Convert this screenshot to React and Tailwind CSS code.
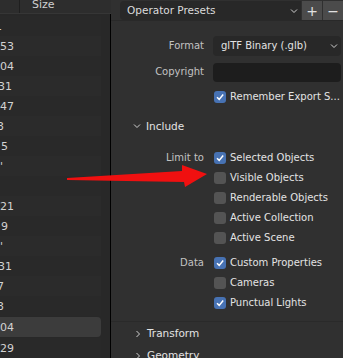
import React from "react";

const leftRows = [
  { t: "1", ml: "-ml-[5px]" },
  { t: "53", ml: "ml-0" },
  { t: "04", ml: "ml-0" },
  { t: "31", ml: "-ml-[2px]" },
  { t: "47", ml: "ml-0" },
  { t: "3", ml: "-ml-[3px]" },
  { t: "5", ml: "ml-[1px]" },
  { t: "'", ml: "ml-0" },
  { t: "", ml: "ml-0" },
  { t: "21", ml: "ml-0" },
  { t: "9", ml: "ml-[1px]" },
  { t: "'", ml: "ml-0" },
  { t: "31", ml: "-ml-[2px]" },
  { t: "7", ml: "-ml-[3px]" },
  { t: "3", ml: "-ml-[3px]" },
  { t: "04", ml: "ml-0", active: true },
  { t: "29", ml: "ml-0" },
];

const Check = ({ on }) => (
  <div
    className={`w-[12px] h-[12px] rounded-[3px] flex items-center justify-center ${
      on ? "bg-[#4772b3]" : "bg-[#545454]"
    }`}
  >
    {on && (
      <svg width="10" height="10" viewBox="0 0 10 10">
        <path d="M2 5.2 L4.2 7.4 L8.2 2.6" fill="none" stroke="#fff" strokeWidth="1.5" />
      </svg>
    )}
  </div>
);

const Row = ({ label, children, className = "" }) => (
  <div className={`flex items-center h-[20px] ${className}`}>
    <div className="w-[93px] shrink-0 text-right text-[#c2c2c2]">{label}</div>
    <div className="ml-[9px] flex-1 flex items-center min-w-0">{children}</div>
  </div>
);

const CheckRow = ({ label, text, on }) => (
  <Row label={label}>
    <div className="ml-[1px] flex items-center gap-[4px]">
      <Check on={on} />
      <span className="text-[#e3e3e3] whitespace-nowrap">{text}</span>
    </div>
  </Row>
);

const Chevron = ({ down }) => (
  <svg width="8" height="8" viewBox="0 0 8 8">
    {down ? (
      <path d="M1 2.5 L4 5.5 L7 2.5" fill="none" stroke="#cfcfcf" strokeWidth="1" />
    ) : (
      <path d="M2.5 1 L5.5 4 L2.5 7" fill="none" stroke="#cfcfcf" strokeWidth="1" />
    )}
  </svg>
);

export default function App() {
  return (
    <div
      className="relative w-[343px] h-[358px] overflow-hidden flex text-[10px] leading-none"
      style={{ fontFamily: '"DejaVu Sans", "Liberation Sans", sans-serif' }}
    >
      {/* file list */}
      <div className="w-[111px] shrink-0 flex flex-col bg-[#282828]">
        <div className="h-[15px] flex bg-[#2d2d2d] border-b border-[#363636]">
          <div className="w-[20px] border-r border-[#1f1f1f]" />
          <div className="pl-[12px] text-[#d0d0d0] text-[11px] -mt-[1px]">Size</div>
        </div>
        <div className="flex-1 flex border-r border-black">
          <div className="w-[101px] pt-[2px] flex flex-col">
            {leftRows.map((r, i) => (
              <div
                key={i}
                className={`h-[20px] flex items-center overflow-hidden ${
                  r.active
                    ? "bg-[#3c3c3c] rounded-r-[4px] my-[1px] h-[18px]"
                    : i % 2
                    ? "bg-[#2b2b2b]"
                    : "bg-[#292929]"
                }`}
              >
                <span className={`text-[#d2d2d2] text-[11px] whitespace-nowrap ${r.ml}`}>{r.t}</span>
              </div>
            ))}
          </div>
        </div>
      </div>

      {/* properties */}
      <div className="flex-1 flex flex-col bg-[#303030]">
        <div className="h-[22px] flex items-start pt-[1px] border-b border-[#292929]">
          <div className="ml-[9px] w-[181px] h-[19px] bg-[#282828] rounded-l-[4px] flex items-center justify-between pl-[7px] pr-[3px]">
            <span className="text-[#dcdcdc] text-[10.5px]">Operator Presets</span>
            <Chevron down />
          </div>
          <div className="ml-[1px] w-[20px] h-[19px] bg-[#4b4b4b] flex items-center justify-center text-[#e0e0e0] text-[14px]">
            +
          </div>
          <div className="ml-[1px] flex-1 h-[19px] bg-[#4b4b4b] flex items-center justify-center text-[#e0e0e0] text-[14px]">
            −
          </div>
        </div>

        <div className="mt-[15px] flex flex-col">
          <Row label="Format">
            <div className="w-[128px] h-[20px] bg-[#282828] rounded-[4px] flex items-center justify-between pl-[8px] pr-[3px]">
              <span className="text-[#e3e3e3] whitespace-nowrap">glTF Binary (.glb)</span>
              <Chevron down />
            </div>
          </Row>
          <Row label="Copyright" className="mt-[6px]">
            <div className="w-[128px] h-[19px] bg-[#1d1d1d] rounded-[4px]" />
          </Row>
          <Row className="mt-[5px]" label="">
            <div className="ml-[1px] flex items-center gap-[4px]">
              <Check on />
              <span className="text-[#e3e3e3] whitespace-nowrap">Remember Export S...</span>
            </div>
          </Row>
        </div>

        <div className="mt-[14px] h-[20px] flex items-center pl-[22px] gap-[5px]">
          <Chevron down />
          <span className="text-[#e3e3e3] text-[10.5px]">Include</span>
        </div>

        <div className="mt-[16px] flex flex-col">
          <CheckRow label="Limit to" text="Selected Objects" on />
          <CheckRow label="" text="Visible Objects" />
          <CheckRow label="" text="Renderable Objects" />
          <CheckRow label="" text="Active Collection" />
          <CheckRow label="" text="Active Scene" />
          <div className="h-[5px]" />
          <CheckRow label="Data" text="Custom Properties" on />
          <CheckRow label="" text="Cameras" />
          <CheckRow label="" text="Punctual Lights" on />
        </div>

        <div className="mt-[8px] border-t border-[#2a2a2a] flex flex-col">
          <div className="mt-[2px] h-[20px] flex items-center pl-[23px] gap-[5px]">
            <Chevron />
            <span className="text-[#e3e3e3] text-[10.5px]">Transform</span>
          </div>
          <div className="mt-[2px] h-[20px] flex items-center pl-[23px] gap-[5px]">
            <Chevron />
            <span className="text-[#e3e3e3] text-[10.5px]">Geometry</span>
          </div>
        </div>
      </div>

      {/* red annotation arrow */}
      <svg className="absolute left-0 top-0 pointer-events-none" width="343" height="358">
        <polygon
          points="67,178 182,171 182,165 207,174 185,187 184,182 67,180"
          fill="#f01010"
        />
      </svg>
    </div>
  );
}
